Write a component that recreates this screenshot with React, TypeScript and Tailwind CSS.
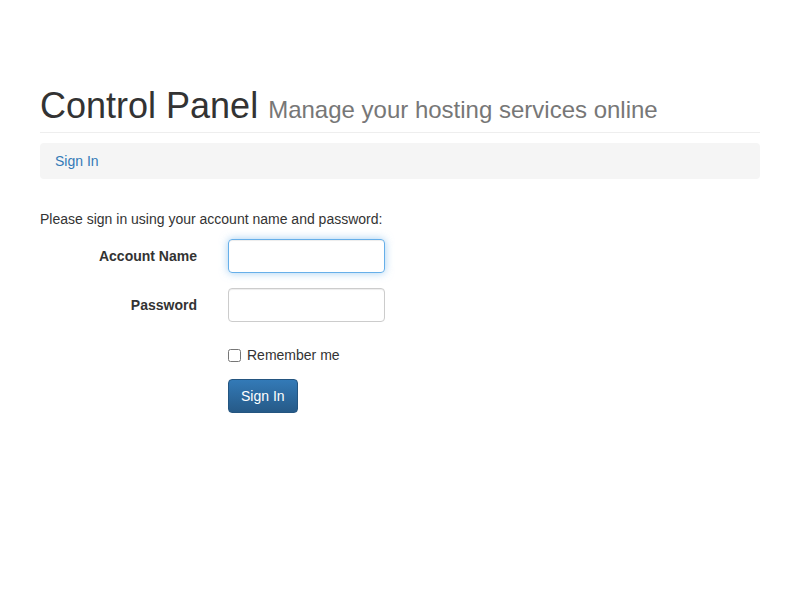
export default function App() {
  return (
    <div className="min-h-screen bg-white text-[14px] text-[#333] px-[40px]" style={{ fontFamily: '"Liberation Sans", Arial, sans-serif' }}>
      <div className="pt-[86px] pb-[2px] border-b border-[#eee]">
        <h1 className="text-[36px] leading-[40px] font-normal">
          Control Panel <span className="text-[24px] text-[#777]">Manage your hosting services online</span>
        </h1>
      </div>
      <div className="mt-[10px] h-[36px] bg-[#f5f5f5] rounded-[4px] flex items-center px-[15px]">
        <a className="text-[#337ab7]" href="#">Sign In</a>
      </div>
      <p className="mt-[30px] leading-[20px]">Please sign in using your account name and password:</p>
      <div className="mt-[10px] flex flex-col gap-[15px]">
        <div className="flex items-center">
          <label className="w-[157px] text-right font-bold">Account Name</label>
          <input className="ml-[31px] w-[157px] h-[34px] border border-[#66afe9] rounded-[4px] shadow-[inset_0_1px_1px_rgba(0,0,0,.075),0_0_8px_rgba(102,175,233,.6)] outline-none" />
        </div>
        <div className="flex items-center">
          <label className="w-[157px] text-right font-bold">Password</label>
          <input type="password" className="ml-[31px] w-[157px] h-[34px] border border-[#ccc] rounded-[4px] shadow-[inset_0_1px_1px_rgba(0,0,0,.075)] outline-none" />
        </div>
        <div className="ml-[188px] mt-[8px] flex items-center gap-[6px]">
          <input type="checkbox" className="w-[13px] h-[13px] m-0" />
          <span>Remember me</span>
        </div>
        <div className="ml-[188px] -mt-[2px]">
          <button className="h-[34px] px-[12px] text-white rounded-[4px] border border-[#245580] bg-gradient-to-b from-[#337ab7] to-[#265a88]">Sign In</button>
        </div>
      </div>
    </div>
  );
}
